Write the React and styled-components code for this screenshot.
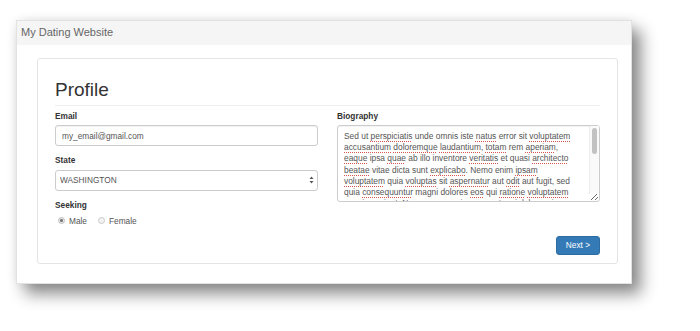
import React from "react";
import styled, { createGlobalStyle } from "styled-components";

const GlobalStyle = createGlobalStyle`
  html, body {
    margin: 0;
    padding: 0;
    background: #ffffff;
    font-family: "Liberation Sans", Arial, sans-serif;
  }
`;

const Stage = styled.div`
  padding: 20px 0 40px 16px;
`;

const Window = styled.div`
  width: 616px;
  box-sizing: border-box;
  background: #fff;
  border: 1px solid #e2e2e2;
  box-shadow: 0 0 10px rgba(0, 0, 0, 0.08), 9px 10px 15px rgba(0, 0, 0, 0.45);
`;

const TitleBar = styled.div`
  height: 24px;
  background: #f5f5f5;
  display: flex;
  align-items: center;
  padding: 0 0 2px 4px;
  box-sizing: border-box;
  font-size: 11px;
  color: #666;
`;

const Body = styled.div`
  padding: 13px 13px 19px 20px;
`;

const Card = styled.div`
  border: 1px solid #e4e4e4;
  border-radius: 3px;
  padding: 20px 17px 8px 17px;
`;

const Heading = styled.h2`
  margin: 0;
  font-size: 19px;
  line-height: 22px;
  font-weight: 400;
  color: #333;
  padding-bottom: 4px;
  border-bottom: 1px solid #eee;
`;

const Grid = styled.div`
  display: grid;
  grid-template-columns: 263px 263px;
  column-gap: 19px;
  margin-top: 4px;
`;

const Column = styled.div`
  display: flex;
  flex-direction: column;
  gap: 8px;
`;

const Field = styled.div`
  display: flex;
  flex-direction: column;
`;

const Label = styled.label`
  font-size: 8.3px;
  line-height: 12px;
  font-weight: 700;
  color: #333;
  margin-bottom: 3px;
`;

const TextInput = styled.input`
  box-sizing: border-box;
  height: 21px;
  width: 100%;
  border: 1px solid #ccc;
  border-radius: 3px;
  padding: 0 6px;
  font: 8.3px "Liberation Sans", Arial, sans-serif;
  color: #555;
  box-shadow: inset 0 1px 1px rgba(0, 0, 0, 0.06);
  outline: none;
`;

const SelectWrap = styled.div`
  position: relative;
`;

const Select = styled.select`
  box-sizing: border-box;
  appearance: none;
  height: 21px;
  width: 100%;
  border: 1px solid #ccc;
  border-radius: 3px;
  padding: 0 4px;
  background: #fff;
  font: 8.3px "Liberation Sans", Arial, sans-serif;
  color: #555;
  outline: none;
`;

const Arrows = styled.svg`
  position: absolute;
  right: 4px;
  top: 7px;
  pointer-events: none;
`;

const RadioRow = styled.div`
  display: flex;
  align-items: center;
  gap: 8px;
  height: 12px;
  margin-top: 1px;
`;

const RadioLabel = styled.label`
  display: flex;
  align-items: center;
  gap: 4px;
  font-size: 8.3px;
  color: #555;
`;

const Radio = styled.input`
  appearance: none;
  margin: 0 0 0 3px;
  width: 7px;
  height: 7px;
  border-radius: 50%;
  border: 1px solid #c9c9c9;
  background: #f3f3f3;
  box-sizing: border-box;

  &:checked {
    background: radial-gradient(circle, #777 0 1.3px, #eaeaea 1.6px);
    border-color: #bdbdbd;
  }
`;

const BioWrap = styled.div`
  position: relative;
`;

const BioBox = styled.div`
  box-sizing: border-box;
  height: 77px;
  border: 1px solid #ccc;
  border-radius: 3px;
  padding: 5px 18px 5px 6px;
  font-size: 8.4px;
  line-height: 11.2px;
  color: #555;
  overflow-y: scroll;
  scrollbar-width: none;
  resize: vertical;
  box-shadow: inset 0 1px 1px rgba(0, 0, 0, 0.05);
`;

/* scrollbar track + thumb drawn over the box edge */
const ScrollTrack = styled.div`
  position: absolute;
  top: 1px;
  right: 1px;
  bottom: 8px;
  width: 9px;
  background: #fafafa;
  border-left: 1px solid #ececec;
  pointer-events: none;
`;

const ScrollThumb = styled.div`
  margin: 2px auto 0;
  width: 5px;
  height: 26px;
  border-radius: 3px;
  background: #c2c2c2;
`;

const Typo = styled.span`
  text-decoration: underline dotted #d9534f;
  text-decoration-thickness: 1px;
  text-underline-offset: 2px;
`;

const Actions = styled.div`
  display: flex;
  justify-content: flex-end;
  margin-top: 9px;
`;

const Button = styled.button`
  height: 19px;
  padding: 0 9px;
  border: 1px solid #2e6da4;
  border-radius: 3px;
  background: #337ab7;
  color: #fff;
  font: 8.3px "Liberation Sans", Arial, sans-serif;
  cursor: pointer;
`;

const bio =
  "Sed ut ~perspiciatis unde omnis iste ~natus error sit ~voluptatem ~accusantium ~doloremque ~laudantium, ~totam rem ~aperiam, ~eaque ipsa ~quae ab illo inventore ~veritatis et quasi ~architecto ~beatae vitae dicta sunt ~explicabo. Nemo enim ~ipsam ~voluptatem quia ~voluptas sit ~aspernatur aut ~odit aut fugit, sed quia ~consequuntur magni dolores ~eos qui ~ratione ~voluptatem ~sequi ~nesciunt. Neque porro ~quisquam est, qui ~dolorem ~ipsum quia dolor sit amet, ~consectetur, ~adipisci ~velit, sed quia non ~numquam ~eius ~modi ~tempora ~incidunt ut ~labore et ~dolore magnam ~aliquam ~quaerat ~voluptatem. Ut enim ad ~minima ~veniam, quis ~nostrum ~exercitationem ~ullam ~corporis ~suscipit ~laboriosam, nisi ut ~aliquid ex ea ~commodi ~consequatur? Quis autem vel ~eum ~iure ~reprehenderit qui in ea ~voluptate ~velit esse ~quam nihil ~molestiae ~consequatur, vel ~illum qui ~dolorem ~eum ~fugiat quo ~voluptas nulla ~pariatur? At vero ~eos et ~accusamus et ~iusto ~odio ~dignissimos ~ducimus qui ~blanditiis ~praesentium ~voluptatum ~deleniti ~atque ~corrupti quos ~dolores et ~quas ~molestias ~excepturi ~sint ~occaecati ~cupiditate non ~provident.";

const BioText = () => (
  <>
    {bio.split(" ").map((w, i) =>
      w.startsWith("~") ? (
        <React.Fragment key={i}>
          <Typo>{w.slice(1).replace(/[.,?]$/, "")}</Typo>
          {w.match(/[.,?]$/) ? w.slice(-1) : ""}{" "}
        </React.Fragment>
      ) : (
        <React.Fragment key={i}>{w} </React.Fragment>
      )
    )}
  </>
);

export default function App() {
  return (
    <>
      <GlobalStyle />
      <Stage>
        <Window>
          <TitleBar>My Dating Website</TitleBar>
          <Body>
            <Card>
              <Heading>Profile</Heading>
              <Grid>
                <Column>
                  <Field>
                    <Label>Email</Label>
                    <TextInput defaultValue="my_email@gmail.com" />
                  </Field>
                  <Field>
                    <Label>State</Label>
                    <SelectWrap>
                      <Select defaultValue="WA">
                        <option value="WA">WASHINGTON</option>
                      </Select>
                      <Arrows width="5" height="8" viewBox="0 0 5 8">
                        <path d="M2.5 0.5 L4.5 3 L0.5 3 Z" fill="#555" />
                        <path d="M2.5 7.5 L4.5 5 L0.5 5 Z" fill="#555" />
                      </Arrows>
                    </SelectWrap>
                  </Field>
                  <Field>
                    <Label>Seeking</Label>
                    <RadioRow>
                      <RadioLabel>
                        <Radio type="radio" name="seeking" defaultChecked />
                        Male
                      </RadioLabel>
                      <RadioLabel>
                        <Radio type="radio" name="seeking" />
                        Female
                      </RadioLabel>
                    </RadioRow>
                  </Field>
                </Column>
                <Column>
                  <Field>
                    <Label>Biography</Label>
                    <BioWrap>
                      <BioBox>
                        <BioText />
                      </BioBox>
                      <ScrollTrack>
                        <ScrollThumb />
                      </ScrollTrack>
                    </BioWrap>
                  </Field>
                </Column>
              </Grid>
              <Actions>
                <Button>Next &gt;</Button>
              </Actions>
            </Card>
          </Body>
        </Window>
      </Stage>
    </>
  );
}
